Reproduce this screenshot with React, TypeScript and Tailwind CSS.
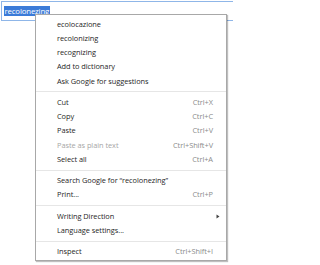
import React from "react";

type Item = { label: string; shortcut?: string; disabled?: boolean; arrow?: boolean } | "sep";

const items: Item[] = [
  { label: "ecolocazione" },
  { label: "recolonizing" },
  { label: "recognizing" },
  { label: "Add to dictionary" },
  { label: "Ask Google for suggestions" },
  "sep",
  { label: "Cut", shortcut: "Ctrl+X" },
  { label: "Copy", shortcut: "Ctrl+C" },
  { label: "Paste", shortcut: "Ctrl+V" },
  { label: "Paste as plain text", shortcut: "Ctrl+Shift+V", disabled: true },
  { label: "Select all", shortcut: "Ctrl+A" },
  "sep",
  { label: "Search Google for \u201crecolonezing\u201d" },
  { label: "Print...", shortcut: "Ctrl+P" },
  "sep",
  { label: "Writing Direction", arrow: true },
  { label: "Language settings..." },
  "sep",
  { label: "Inspect", shortcut: "Ctrl+Shift+I" },
];

export default function App() {
  return (
    <div
      className="relative w-[233px] h-[265px] bg-white overflow-hidden"
      style={{ fontFamily: '"Open Sans", "Noto Sans", sans-serif' }}
    >
      <div className="ml-[1px] mt-[1px] h-[20px] w-[240px] border border-[#8fb6e8] bg-white flex items-center pl-[2px]">
        <span className="bg-[#3b7bd8] text-white text-[7.8px] leading-[10px] px-[0.5px] tracking-[-0.15px]">
          recolonezing
        </span>
      </div>
      <div className="absolute left-[35px] top-[14px] w-[192px] h-[247px] bg-white border border-[#a8a8a8] shadow-[1px_1px_1px_rgba(0,0,0,0.25)] pt-[2px] pb-[2px]">
        {items.map((it, i) =>
          it === "sep" ? (
            <div key={i} className="h-[7px] flex items-center">
              <div className="h-px w-full bg-[#e6e6e6]" />
            </div>
          ) : (
            <div
              key={i}
              className={`h-[14.25px] flex items-center pl-[21px] pr-[13px] text-[7.4px] tracking-[-0.05px] ${
                it.disabled ? "text-[#a6a6a6]" : "text-[#1f1f1f]"
              }`}
            >
              <span className="flex-1 whitespace-nowrap">{it.label}</span>
              {it.shortcut && <span className="text-[#8c8c8c] whitespace-nowrap">{it.shortcut}</span>}
              {it.arrow && (
                <svg width="4" height="5" viewBox="0 0 4 5" className="mr-[-7px]">
                  <path d="M0.5 0.5 L3.5 2.5 L0.5 4.5 Z" fill="#444" />
                </svg>
              )}
            </div>
          )
        )}
      </div>
    </div>
  );
}
